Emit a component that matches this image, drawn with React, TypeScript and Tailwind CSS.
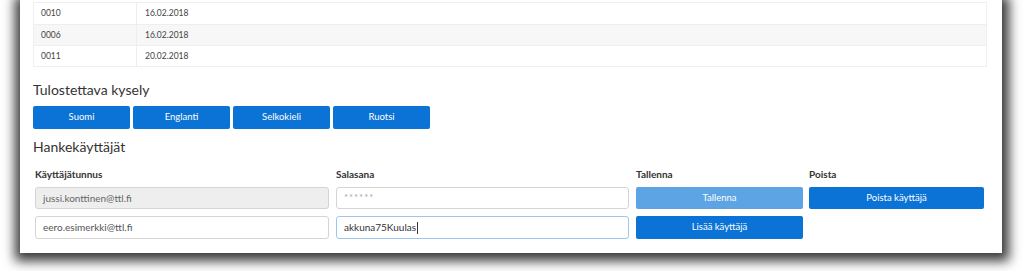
import React from 'react'

const rows = [
  { id: '0010', date: '16.02.2018', striped: false },
  { id: '0006', date: '16.02.2018', striped: true },
  { id: '0011', date: '20.02.2018', striped: false },
]

const languages = ['Suomi', 'Englanti', 'Selkokieli', 'Ruotsi']

export default function App() {
  return (
    <div
      className="w-[1023px] h-[271px] overflow-hidden bg-white"
      style={{ fontFamily: 'Lato, "Open Sans", sans-serif' }}
    >
      <div className="ml-[20px] w-[982px] h-[253px] bg-white shadow-[1px_2px_11px_6px_rgba(0,0,0,0.78)] pl-[13px]">
        {/* results table */}
        <div className="pt-[2px] w-[954px]">
          <div className="border border-[#efefef]">
            {rows.map((r, i) => (
              <div
                key={r.id}
                className={`flex h-[21px] text-[8.5px] text-[#444] ${r.striped ? 'bg-[#f7f7f7]' : 'bg-white'} ${i > 0 ? 'border-t border-[#eeeeee]' : ''}`}
              >
                <div className="w-[103px] border-r border-[#eeeeee] pl-[7px] flex items-center">{r.id}</div>
                <div className="pl-[8px] flex items-center">{r.date}</div>
              </div>
            ))}
          </div>
        </div>

        <h2 className="mt-[13px] h-[20px] leading-[20px] text-[14px] text-[#333]">Tulostettava kysely</h2>

        <div className="mt-[6px] flex gap-[3px]">
          {languages.map((l) => (
            <button
              key={l}
              className="w-[97px] h-[23px] rounded-[2px] bg-[#0b72d6] text-white text-[9.5px]"
            >
              {l}
            </button>
          ))}
        </div>

        <h2 className="mt-[8px] h-[20px] leading-[20px] text-[14px] text-[#333]">Hankekäyttäjät</h2>

        {/* user grid */}
        <div className="mt-[6px] ml-[2px] grid grid-cols-[294px_293px_167px_174px] gap-x-[7px] text-[9.5px]">
          <div className="h-[22px] flex items-center font-bold text-[#333] text-[10px]">Käyttäjätunnus</div>
          <div className="h-[22px] flex items-center font-bold text-[#333] text-[10px]">Salasana</div>
          <div className="h-[22px] flex items-center font-bold text-[#333] text-[10px]">Tallenna</div>
          <div className="h-[22px] flex items-center font-bold text-[#333] text-[10px] -ml-[1px]">Poista</div>

          <div className="mt-[2px] h-[22px] rounded-[3px] border border-[#d4d4d4] bg-[#eeeeee] pl-[7px] flex items-center text-[#666] text-[10px]">
            jussi.konttinen@ttl.fi
          </div>
          <div className="mt-[2px] h-[22px] rounded-[3px] border border-[#d4d4d4] bg-white pl-[7px] flex items-center text-[#aaa] tracking-[1px]">
            ******
          </div>
          <button className="mt-[2px] h-[22px] rounded-[2px] bg-[#5ca4e4] text-white">Tallenna</button>
          <button className="mt-[2px] h-[22px] -ml-[1px] rounded-[2px] bg-[#0b72d6] text-white">Poista käyttäjä</button>

          <div className="mt-[7px] h-[23px] rounded-[3px] border border-[#d4d4d4] bg-white pl-[7px] flex items-center text-[#555] text-[10px]">
            eero.esimerkki@ttl.fi
          </div>
          <div className="mt-[7px] h-[23px] rounded-[3px] border border-[#9cc8ee] bg-white pl-[7px] flex items-center text-[#333] text-[10px]">
            akkuna75Kuulas
            <span className="ml-[1px] w-px h-[12px] bg-[#333]" />
          </div>
          <button className="mt-[7px] h-[23px] rounded-[2px] bg-[#0b72d6] text-white">Lisää käyttäjä</button>
          <div />
        </div>
      </div>
    </div>
  )
}
